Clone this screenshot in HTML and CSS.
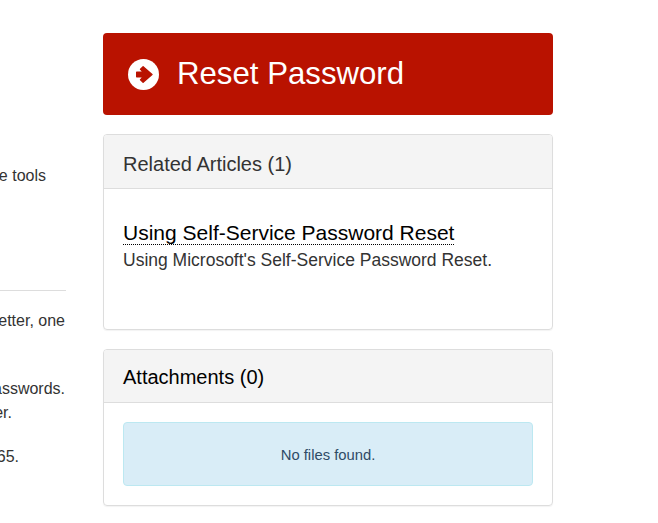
FILE: index.html
```html
<!DOCTYPE html>
<html lang="en">
<head>
<meta charset="utf-8">
<title>Reset Password</title>
<link rel="stylesheet" href="styles.css">
</head>
<body>
<div class="page">
  <main class="article">
    <p class="line line-tools">the tools</p>
    <hr class="rule">
    <p class="line line-one">letter, one</p>
    <p class="line line-passwords">passwords.</p>
    <p class="line line-er">number.</p>
    <p class="line line-365">Office 365.</p>
  </main>
  <aside class="side">
    <a class="cta" href="#">
      <svg class="cta-icon" viewBox="0 0 31 31" aria-hidden="true">
        <circle cx="15.5" cy="15.5" r="15.5" fill="#fff"/>
        <path fill="#b91200" stroke="#b91200" stroke-width="1.4" stroke-linejoin="round" d="M8.7 13.2h6.8l-3-3 2.6-2.4 8.9 7.7-8.9 7.7-2.6-2.4 3-3H8.7z"/>
      </svg>
      <span>Reset Password</span>
    </a>
    <section class="panel panel-related">
      <h2 class="panel-head">Related Articles (1)</h2>
      <div class="panel-body related-body">
        <a class="art-title" href="#">Using Self-Service Password Reset</a>
        <p class="art-desc">Using Microsoft's Self-Service Password Reset.</p>
      </div>
    </section>
    <section class="panel">
      <h2 class="panel-head panel-head-dark">Attachments (0)</h2>
      <div class="panel-body">
        <div class="notice">No files found.</div>
      </div>
    </section>
  </aside>
</div>
</body>
</html>
```
FILE: styles.css
```css
* { box-sizing: border-box; }
html, body { margin: 0; padding: 0; }
body {
  background: #fff;
  color: #333;
  font-family: "Liberation Sans", Arial, sans-serif;
  font-size: 16px;
  line-height: 24px;
  overflow: hidden;
  height: 523px;
}
.page {
  display: flex;
  gap: 37px;
  padding-top: 33px;
}
.article {
  flex: 0 0 66px;
  padding-top: 131px;
}
.line {
  width: 166px;
  margin: 0 0 0 -100px;
  text-align: right;
  white-space: nowrap;
}
.line-tools { padding-right: 20px; }
.rule {
  border: 0;
  border-top: 1px solid #ddd;
  margin: 102px 0 0;
}
.line-one { margin-top: 18px; padding-right: 1px; }
.line-passwords { margin-top: 44px; padding-right: 1px; }
.line-er { padding-right: 54px; }
.line-365 { margin-top: 20px; padding-right: 47px; }
.side {
  flex: 0 0 450px;
  display: flex;
  flex-direction: column;
  gap: 19px;
}
.cta {
  display: flex;
  align-items: center;
  gap: 18px;
  height: 82px;
  padding: 0 25px;
  background: #b91200;
  border-radius: 4px;
  color: #fff;
  font-size: 31.2px;
  text-decoration: none;
}
.cta-icon { width: 31px; height: 31px; flex: none; }
.panel {
  border: 1px solid #ddd;
  border-radius: 4px;
  box-shadow: 0 1px 1px rgba(0, 0, 0, .05);
  overflow: hidden;
}
.panel-related { height: 196px; }
.panel-head {
  margin: 0;
  height: 54px;
  padding: 0 19px;
  background: #f4f4f4;
  border-bottom: 1px solid #ddd;
  font-size: 20px;
  font-weight: 400;
  line-height: 58px;
  color: #333;
}
.panel-head-dark { height: 53px; line-height: 54px; color: #000; }
.panel-body { padding: 19px; }
.related-body { padding-top: 32px; }
.art-title {
  display: inline-block;
  color: #000;
  font-size: 21px;
  line-height: 23px;
  text-decoration: none;
  border-bottom: 1px dotted #000;
}
.art-desc { margin: -2px 0 0; font-size: 17.5px; line-height: 30px; }
.notice {
  height: 64px;
  background: #d9edf7;
  border: 1px solid #bce8f1;
  border-radius: 4px;
  color: #2f4b66;
  font-size: 14.8px;
  line-height: 64px;
  text-align: center;
}
```
